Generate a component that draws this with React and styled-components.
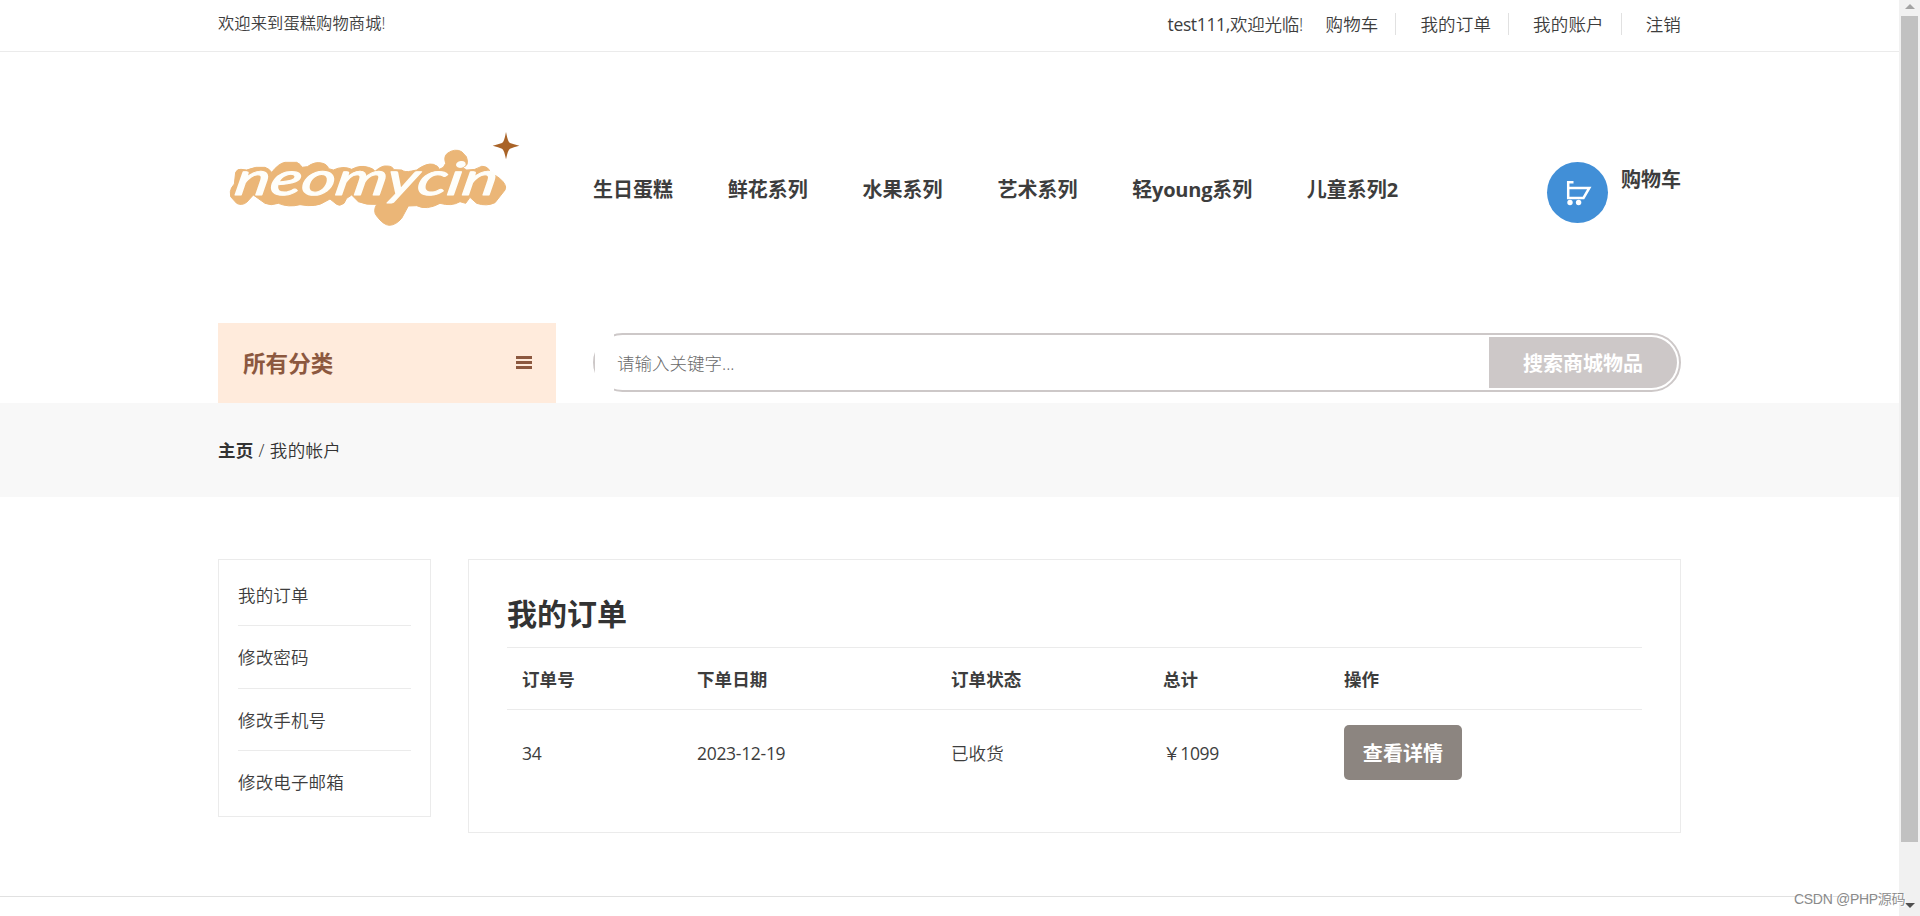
import React from 'react'
import styled, { createGlobalStyle } from 'styled-components'

const GlobalStyle = createGlobalStyle`
  * {
    box-sizing: border-box;
  }

  body {
    margin: 0;
    background: #fff;
    color: #3d3d3d;
    font-family: 'Open Sans', 'Noto Sans CJK SC', sans-serif;
    font-size: 17.5px;
    line-height: 24px;
    overflow: hidden;
  }

  a {
    color: inherit;
    text-decoration: none;
  }
`

const Window = styled.div`
  display: flex;
  height: 916px;
  overflow: hidden;
`

const Page = styled.div`
  flex: 1;
  height: 1100px;
`

const Container = styled.div`
  display: flex;
  width: 1463px;
  margin: 0 auto;
`

const TopBar = styled.div`
  height: 52px;
  border-bottom: 1px solid #ebebeb;
`

const TopInner = styled(Container)`
  justify-content: space-between;
  padding-top: 12px;
  font-weight: 350;
`

const Welcome = styled.span`
  margin-top: -1px;
  font-size: 16.25px;
  letter-spacing: 0.1px;
`

const TopLinks = styled.div`
  display: flex;
  align-items: center;
  height: 24px;
`

const UserName = styled.span`
  width: 158px;
  letter-spacing: -0.2px;
  white-space: nowrap;
`

const Latin = styled.span`
  font-weight: 400;
  letter-spacing: -0.35px;
`

const TopLink = styled.a`
  padding-right: 17px;
  margin-right: 24px;
  line-height: 22px;
  letter-spacing: 0.15px;
  border-right: 1px solid #e1e1e1;

  &:last-child {
    padding-right: 0;
    margin-right: 0;
    border: 0;
  }
`

const Header = styled(Container)`
  height: 271px;
`

const LogoBox = styled.div`
  width: 375px;
  padding: 78px 0 0 9px;
`

const Nav = styled.nav`
  display: flex;
  flex: 1;
  gap: 54.8px;
  padding-top: 126px;
  font-size: 20px;
  font-weight: 700;
`

const NavLink = styled.a`
  white-space: nowrap;

  &:nth-child(5) {
    letter-spacing: -0.2px;
  }
`

const CartBox = styled.div`
  display: flex;
  gap: 13px;
  padding-top: 110px;
  font-size: 20px;
  font-weight: 700;
`

const CartCircle = styled.div`
  display: flex;
  align-items: center;
  justify-content: center;
  width: 61px;
  height: 61px;
  padding-left: 3px;
  border-radius: 50%;
  background: #418fd7;
`

const CartText = styled.span`
  padding-top: 6px;
`

const SearchRow = styled(Container)`
  height: 80px;
`

const Category = styled.div`
  display: flex;
  align-items: center;
  justify-content: space-between;
  width: 338px;
  height: 80px;
  margin-right: 37px;
  padding: 2px 24px 0 25px;
  background: #ffebdc;
  color: #8c583f;
  font-size: 22.5px;
  font-weight: 700;
  letter-spacing: 0.1px;
`

const Bars = styled.span`
  display: flex;
  flex-direction: column;
  gap: 2px;
  width: 16px;
  margin-top: -3px;

  i {
    height: 3px;
    background: #8c583f;
  }
`

const SearchForm = styled.div`
  position: relative;
  display: flex;
  width: 1088px;
  height: 59px;
  margin-top: 10px;
  padding: 2px;
  border: 2px solid #cdc8c8;
  border-radius: 30px;

  &::before {
    content: '';
    position: absolute;
    top: -2px;
    bottom: -2px;
    left: 0;
    width: 19px;
    background: #fff;
  }
`

const SearchInput = styled.input`
  flex: 1;
  padding: 0 0 0 20px;
  border: 0;
  background: transparent;
  font: inherit;
  font-weight: 300;

  &::placeholder {
    color: #6a6a6a;
    opacity: 1;
  }
`

const SearchButton = styled.button`
  width: 188px;
  padding: 2px 0 0;
  border: 0;
  border-radius: 0 26px 26px 0;
  background: #cdc8c8;
  color: #fff;
  font: inherit;
  font-size: 20px;
  font-weight: 700;
`

const Breadcrumb = styled.div`
  height: 94px;
  padding-top: 35px;
  background: #f8f8f8;
  color: #333;
  font-weight: 350;

  b {
    font-weight: 700;
  }
`

const Crumbs = styled(Container)`
  white-space: pre;
  letter-spacing: 0.35px;
`

const Account = styled(Container)`
  align-items: flex-start;
  gap: 37px;
  padding-top: 62px;
`

const SideMenu = styled.ul`
  width: 213px;
  height: 258px;
  margin: 0;
  padding: 4px 19px;
  border: 1px solid #ebebeb;
  list-style: none;
`

const SideItem = styled.li`
  height: 62.4px;
  padding-top: 19px;
  border-bottom: 1px solid #ebebeb;
  font-weight: 350;
  letter-spacing: 0.15px;

  &:last-child {
    border: 0;
  }
`

const Panel = styled.section`
  width: 1213px;
  height: 274px;
  padding: 34px 38px;
  border: 1px solid #ebebeb;
`

const Title = styled.h2`
  margin: 0 0 13px;
  color: #333;
  font-size: 30px;
  font-weight: 700;
  line-height: 40px;
`

const OrderTable = styled.table`
  width: 1135px;
  border-collapse: collapse;
  table-layout: fixed;
`

const HeadCell = styled.th`
  width: ${(props) => props.$width}px;
  height: 62px;
  padding: 0 15px;
  border-top: 1px solid #ebebeb;
  border-bottom: 1px solid #ebebeb;
  text-align: left;
  font-weight: 700;
  letter-spacing: 0.1px;
`

const Cell = styled.td`
  height: 87px;
  padding: 0 15px;
  font-weight: ${(props) => (props.$latin ? 400 : 350)};
  letter-spacing: ${(props) => (props.$latin ? '-0.3px' : '0.1px')};
`

const DetailLink = styled.a`
  display: block;
  width: 118px;
  height: 55px;
  margin-top: -2px;
  border-radius: 5px;
  background: #8c8580;
  color: #fff;
  font-size: 20px;
  font-weight: 700;
  line-height: 57px;
  text-align: center;
`

const FooterLine = styled.div`
  height: 1px;
  margin-top: 63px;
  background: #e1e1e1;
`

const ScrollTrack = styled.div`
  display: flex;
  flex-direction: column;
  align-items: center;
  justify-content: space-between;
  width: 21px;
  height: 916px;
  padding: 4px 0 8px;
  background: #f1f1f1;
`

const ScrollThumb = styled.div`
  width: 17px;
  height: 826px;
  margin-top: 7px;
  margin-bottom: auto;
  background: #c1c1c1;
`

const ScrollArrow = styled.i`
  border: 5px solid transparent;
  border-width: ${(props) => (props.$up ? '0 5px 5px' : '5px 5px 0')};
  border-${(props) => (props.$up ? 'bottom' : 'top')}-color: ${(props) => (props.$up ? '#a3a3a3' : '#505050')};
`

const Watermark = styled.span`
  position: absolute;
  top: 888px;
  left: 1794px;
  color: #8a8a8a;
  font-family: 'Liberation Sans', 'Noto Sans CJK SC', sans-serif;
  font-size: 14px;
  font-weight: 350;
  letter-spacing: -0.3px;
  line-height: 22px;
  white-space: nowrap;
  text-shadow: 1px 1px 0 #fff;
`

const navItems = ['生日蛋糕', '鲜花系列', '水果系列', '艺术系列', '轻young系列', '儿童系列2']
const topItems = ['购物车', '我的订单', '我的账户', '注销']
const sideItems = ['我的订单', '修改密码', '修改手机号', '修改电子邮箱']
const columns = [
  { label: '订单号', width: 175 },
  { label: '下单日期', width: 254 },
  { label: '订单状态', width: 212 },
  { label: '总计', width: 181 },
  { label: '操作', width: 313 },
]
const orders = [{ id: '34', date: '2023-12-19', status: '已收货', total: '￥1099' }]

const Logo = () => (
  <svg width="297" height="98" viewBox="81 60 891 294">
    <path
      fill="#ebb677"
      stroke="#ebb677"
      strokeWidth="3"
      strokeLinejoin="round"
      d="M91 245Q92 234 103 222L107 187Q112 176 123 178L140 180Q168 168 195 172Q208 176 215 187Q236 160 255 157L290 157Q302 162 306 172L322 170Q345 154 365 159Q382 163 386 176L400 180Q430 166 455 178Q480 164 505 172Q520 175 525 184Q545 166 560 168Q578 168 581 179L605 180Q615 188 635 183L650 180Q680 158 700 163Q716 168 718 178L730 172L737 160Q730 140 742 130Q765 114 785 125L799 140Q806 160 798 167L788 173L800 180Q825 182 845 169Q865 168 871 188L892 200Q914 215 917 231L915 240L885 278Q860 290 830 280L810 262L797 280L780 275Q755 290 720 280Q680 302 650 287L625 288L605 325Q588 345 568 346Q550 345 530 318Q518 304 530 283Q500 286 475 275L455 255L440 265L432 280Q418 290 410 283L390 267L375 275Q350 293 300 284Q265 293 235 280Q212 288 195 280L160 255L140 277Q125 288 110 280L92 260Z"
    />
    <text
      x="0"
      y="0"
      transform="translate(100 256) skewX(-10)"
      textLength="786"
      lengthAdjust="spacingAndGlyphs"
      fill="#fefefa"
      stroke="#fefefa"
      strokeWidth="3"
      strokeLinejoin="round"
      fontFamily="Lato, sans-serif"
      fontStyle="italic"
      fontWeight="400"
      fontSize="138"
    >
      neomycin
    </text>
    <path
      fill="#a96327"
      d="M918 66Q924 98 930 99Q940 103 958 107Q940 111 930 116Q924 118 918 148Q912 118 906 116Q896 111 878 107Q896 103 906 99Q912 98 918 66Z"
    />
  </svg>
)

const CartIcon = () => (
  <svg width="26" height="26" viewBox="0 0 26 26" fill="none" stroke="#fff" strokeWidth="2.5">
    <path d="M7.5 2.2H2.2V18H17.5L23.3 8H2.2" />
    <circle cx="4" cy="22.5" r="2.7" fill="#fff" stroke="none" />
    <circle cx="12.6" cy="22.5" r="2.7" fill="#fff" stroke="none" />
  </svg>
)

const App = () => {
  return (
    <>
      <GlobalStyle />
      <Window>
        <Page>
          <TopBar>
            <TopInner>
              <Welcome>欢迎来到蛋糕购物商城!</Welcome>
              <TopLinks>
                <UserName>
                  <Latin>test111,</Latin>欢迎光临!
                </UserName>
                {topItems.map((item) => (
                  <TopLink href="#" key={item}>{item}</TopLink>
                ))}
              </TopLinks>
            </TopInner>
          </TopBar>

          <Header>
            <LogoBox>
              <Logo />
            </LogoBox>
            <Nav>
              {navItems.map((item) => (
                <NavLink href="#" key={item}>{item}</NavLink>
              ))}
            </Nav>
            <CartBox>
              <CartCircle>
                <CartIcon />
              </CartCircle>
              <CartText>购物车</CartText>
            </CartBox>
          </Header>

          <SearchRow>
            <Category>
              所有分类
              <Bars><i /><i /><i /></Bars>
            </Category>
            <SearchForm>
              <SearchInput placeholder="请输入关键字..." />
              <SearchButton>搜索商城物品</SearchButton>
            </SearchForm>
          </SearchRow>

          <Breadcrumb>
            <Crumbs>
              <b>主页</b>
              <span> / 我的帐户</span>
            </Crumbs>
          </Breadcrumb>

          <Account>
            <SideMenu>
              {sideItems.map((item) => (
                <SideItem key={item}>
                  <a href="#">{item}</a>
                </SideItem>
              ))}
            </SideMenu>
            <Panel>
              <Title>我的订单</Title>
              <OrderTable>
                <thead>
                  <tr>
                    {columns.map((col) => (
                      <HeadCell key={col.label} $width={col.width}>{col.label}</HeadCell>
                    ))}
                  </tr>
                </thead>
                <tbody>
                  {orders.map((order) => (
                    <tr key={order.id}>
                      <Cell $latin>{order.id}</Cell>
                      <Cell $latin>{order.date}</Cell>
                      <Cell>{order.status}</Cell>
                      <Cell $latin>{order.total}</Cell>
                      <Cell>
                        <DetailLink href="#">查看详情</DetailLink>
                      </Cell>
                    </tr>
                  ))}
                </tbody>
              </OrderTable>
            </Panel>
          </Account>
          <FooterLine />
        </Page>

        <ScrollTrack>
          <ScrollArrow $up />
          <ScrollThumb />
          <ScrollArrow />
        </ScrollTrack>
      </Window>
      <Watermark>CSDN @PHP源码</Watermark>
    </>
  )
}

export default App
